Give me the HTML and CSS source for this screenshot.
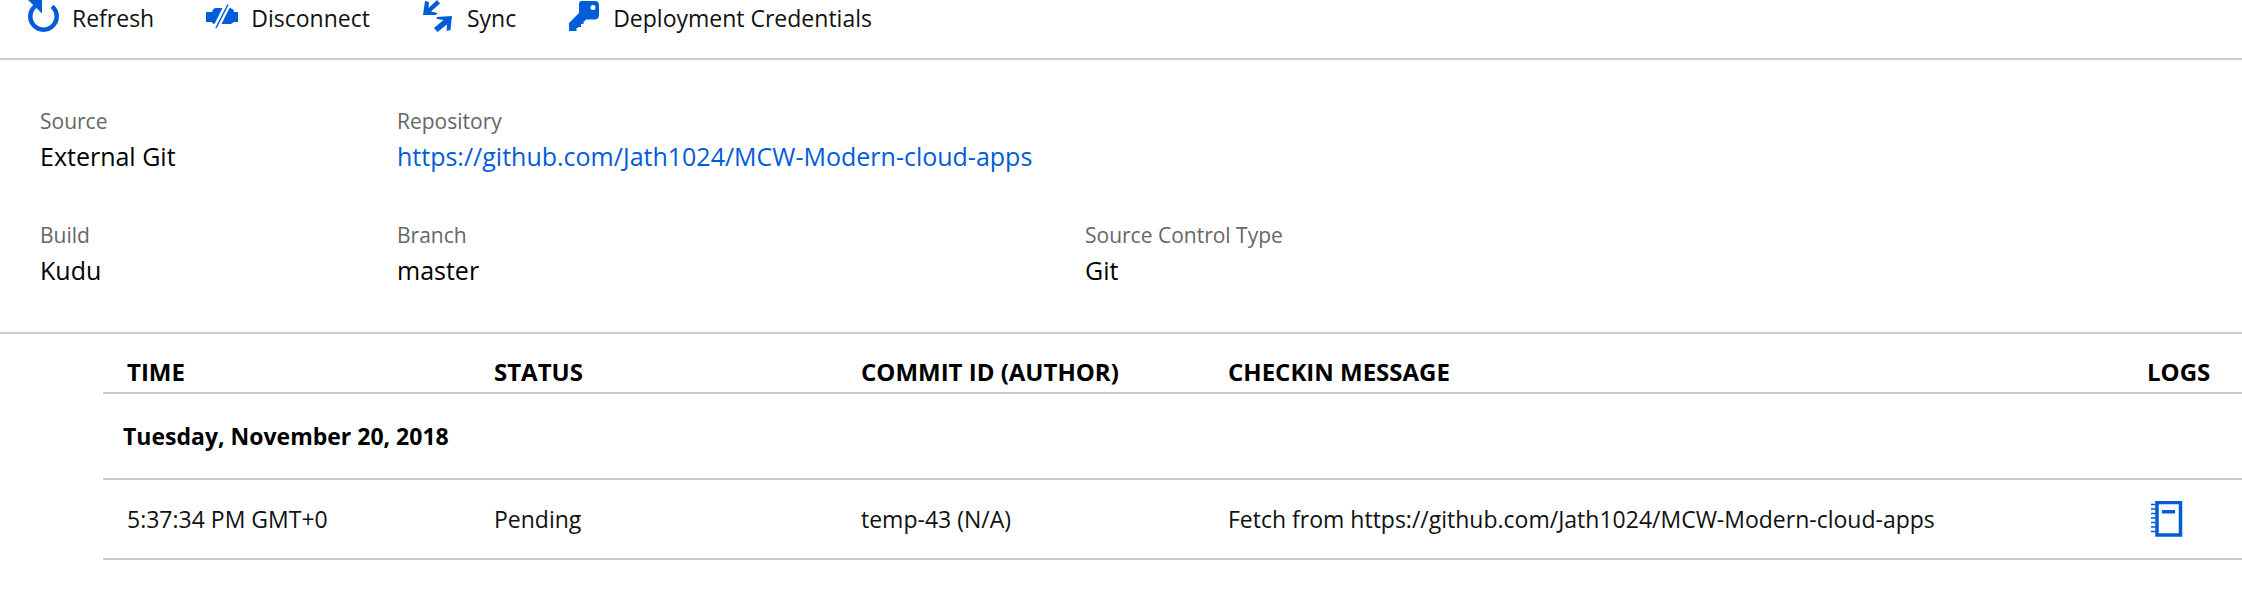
FILE: index.html
```
<!DOCTYPE html>
<html lang="en">
<head>
<meta charset="utf-8">
<title>Deployment Center</title>
<link rel="stylesheet" href="styles.css">
</head>
<body>
<nav class="toolbar" aria-label="Deployment actions">
  <button class="command" type="button">
    <svg class="icon" viewBox="0 1 32 32" aria-hidden="true"><path d="M25 5.400A13.200 13.200 0 1 1 8 5.400" fill="none" stroke="currentColor" stroke-width="4.500"/><path d="M0 -2H15V12.500Z" fill="currentColor"/></svg>
    Refresh
  </button>
  <button class="command" type="button">
    <svg class="icon" viewBox="0 1 32 32" aria-hidden="true"><path fill="currentColor" d="M0 11H6Q6.500 8 9 7H16.500L8.500 23Q6 22.500 5.500 21H0ZM23.500 7Q28 7.500 28 11H32V21H28L25 23H15.500Z"/><path d="M22 3.500L10 27" stroke="currentColor" stroke-width="1.500"/></svg>
    Disconnect
  </button>
  <button class="command" type="button">
    <svg class="icon" viewBox="0 1 32 32" aria-hidden="true"><path fill="currentColor" d="M3 0L7 1L6.500 7L15 -1L18 2.500L9 10.500L15.500 12L14 14L1 14ZM14.500 16L30 15L28.500 29L24.500 30L25 23.500L15.500 31L12 27L21.500 19L15 18Z"/></svg>
    Sync
  </button>
  <button class="command" type="button">
    <svg class="icon" viewBox="0 2 32 32" aria-hidden="true"><path fill="currentColor" fill-rule="evenodd" d="M14 1H27Q31 1 31 5V15Q31 19 27 19.500H18L15.500 22V24H13V27H10V28H8.500V31H1V23L11 13V4Q11 1 14 1ZM25 5A2.500 2.500 0 1 0 25 10A2.500 2.500 0 1 0 25 5Z"/></svg>
    Deployment Credentials
  </button>
</nav>
<main>
  <dl class="summary">
    <div class="field"><dt>Source</dt><dd>External Git</dd></div>
    <div class="field field-wide"><dt>Repository</dt><dd><a href="https://github.com/Jath1024/MCW-Modern-cloud-apps">https://github.com/Jath1024/MCW-Modern-cloud-apps</a></dd></div>
    <div class="field"><dt>Build</dt><dd>Kudu</dd></div>
    <div class="field"><dt>Branch</dt><dd>master</dd></div>
    <div class="field"><dt>Source Control Type</dt><dd>Git</dd></div>
  </dl>
  <div class="history">
    <table class="deployments">
      <colgroup><col class="col"><col class="col"><col class="col"><col><col class="col-logs"></colgroup>
      <thead>
        <tr><th scope="col">TIME</th><th scope="col">STATUS</th><th scope="col">COMMIT ID (AUTHOR)</th><th scope="col">CHECKIN MESSAGE</th><th scope="col">LOGS</th></tr>
      </thead>
      <tbody>
        <tr class="group"><th scope="rowgroup" colspan="5">Tuesday, November 20, 2018</th></tr>
        <tr class="entry"><td>5:37:34 PM GMT+0</td><td>Pending</td><td>temp-43 (N/A)</td><td>Fetch from https://github.com/Jath1024/MCW-Modern-cloud-apps</td>
          <td><button class="log" type="button" aria-label="View logs"><svg class="log-icon" viewBox="0 0 36 36" aria-hidden="true"><path d="M7 1.500H30.500V34H7Z" fill="none" stroke="currentColor" stroke-width="3.500"/><path d="M12 9H25V12.500H12Z" fill="currentColor"/><path d="M1 3.500H7M1 8H7M1 12.500H7M1 17H7M1 21.500H7M1 26H7M1 30.500H7" stroke="currentColor" stroke-width="1.500"/></svg></button></td></tr>
      </tbody>
    </table>
  </div>
</main>
</body>
</html>
```
FILE: styles.css
```
* { box-sizing: border-box; }

body {
  margin: 0;
  background: #fff;
  color: #000;
  font-family: "Open Sans", "Noto Sans", sans-serif;
  font-size: 23px;
  line-height: 32px;
}

button {
  padding: 0;
  border: 0;
  background: none;
  color: inherit;
  font: inherit;
  cursor: pointer;
}

.toolbar {
  display: flex;
  gap: 52px;
  padding: 0 27px 22px;
  border-bottom: 2px solid #ccc;
}

.command {
  display: flex;
  align-items: center;
  gap: 13px;
  color: #111;
  line-height: 36px;
}

.icon {
  width: 32px;
  height: 32px;
  overflow: visible;
  color: #015cda;
}

.summary {
  display: grid;
  grid-template-columns: 357px 688px 1fr;
  row-gap: 44px;
  margin: 0;
  padding: 45px 40px 43px;
  border-bottom: 2px solid #ccc;
}

.field-wide { grid-column: span 2; }

dt {
  color: #666;
  font-size: 21px;
}

dd {
  margin: 0;
  font-size: 25px;
  line-height: 38px;
}

a {
  color: #015cda;
  text-decoration: none;
}

.history { padding-left: 103px; }

.deployments {
  width: 100%;
  border-collapse: separate;
  border-spacing: 0;
  table-layout: fixed;
}

.col { width: 367px; }
.col-logs { width: 119px; }

.deployments th,
.deployments td {
  padding: 0 0 0 24px;
  border-bottom: 2px solid #ccc;
  text-align: left;
  white-space: nowrap;
}

.deployments thead th {
  padding-top: 22px;
  padding-bottom: 4px;
  font-size: 24px;
}

.deployments .group th {
  height: 86px;
  padding-left: 20px;
}

.entry td {
  height: 80px;
  color: #111;
}

.log {
  display: block;
  padding-left: 3px;
}

.log-icon {
  display: block;
  width: 36px;
  height: 36px;
  color: #015cda;
}
```
